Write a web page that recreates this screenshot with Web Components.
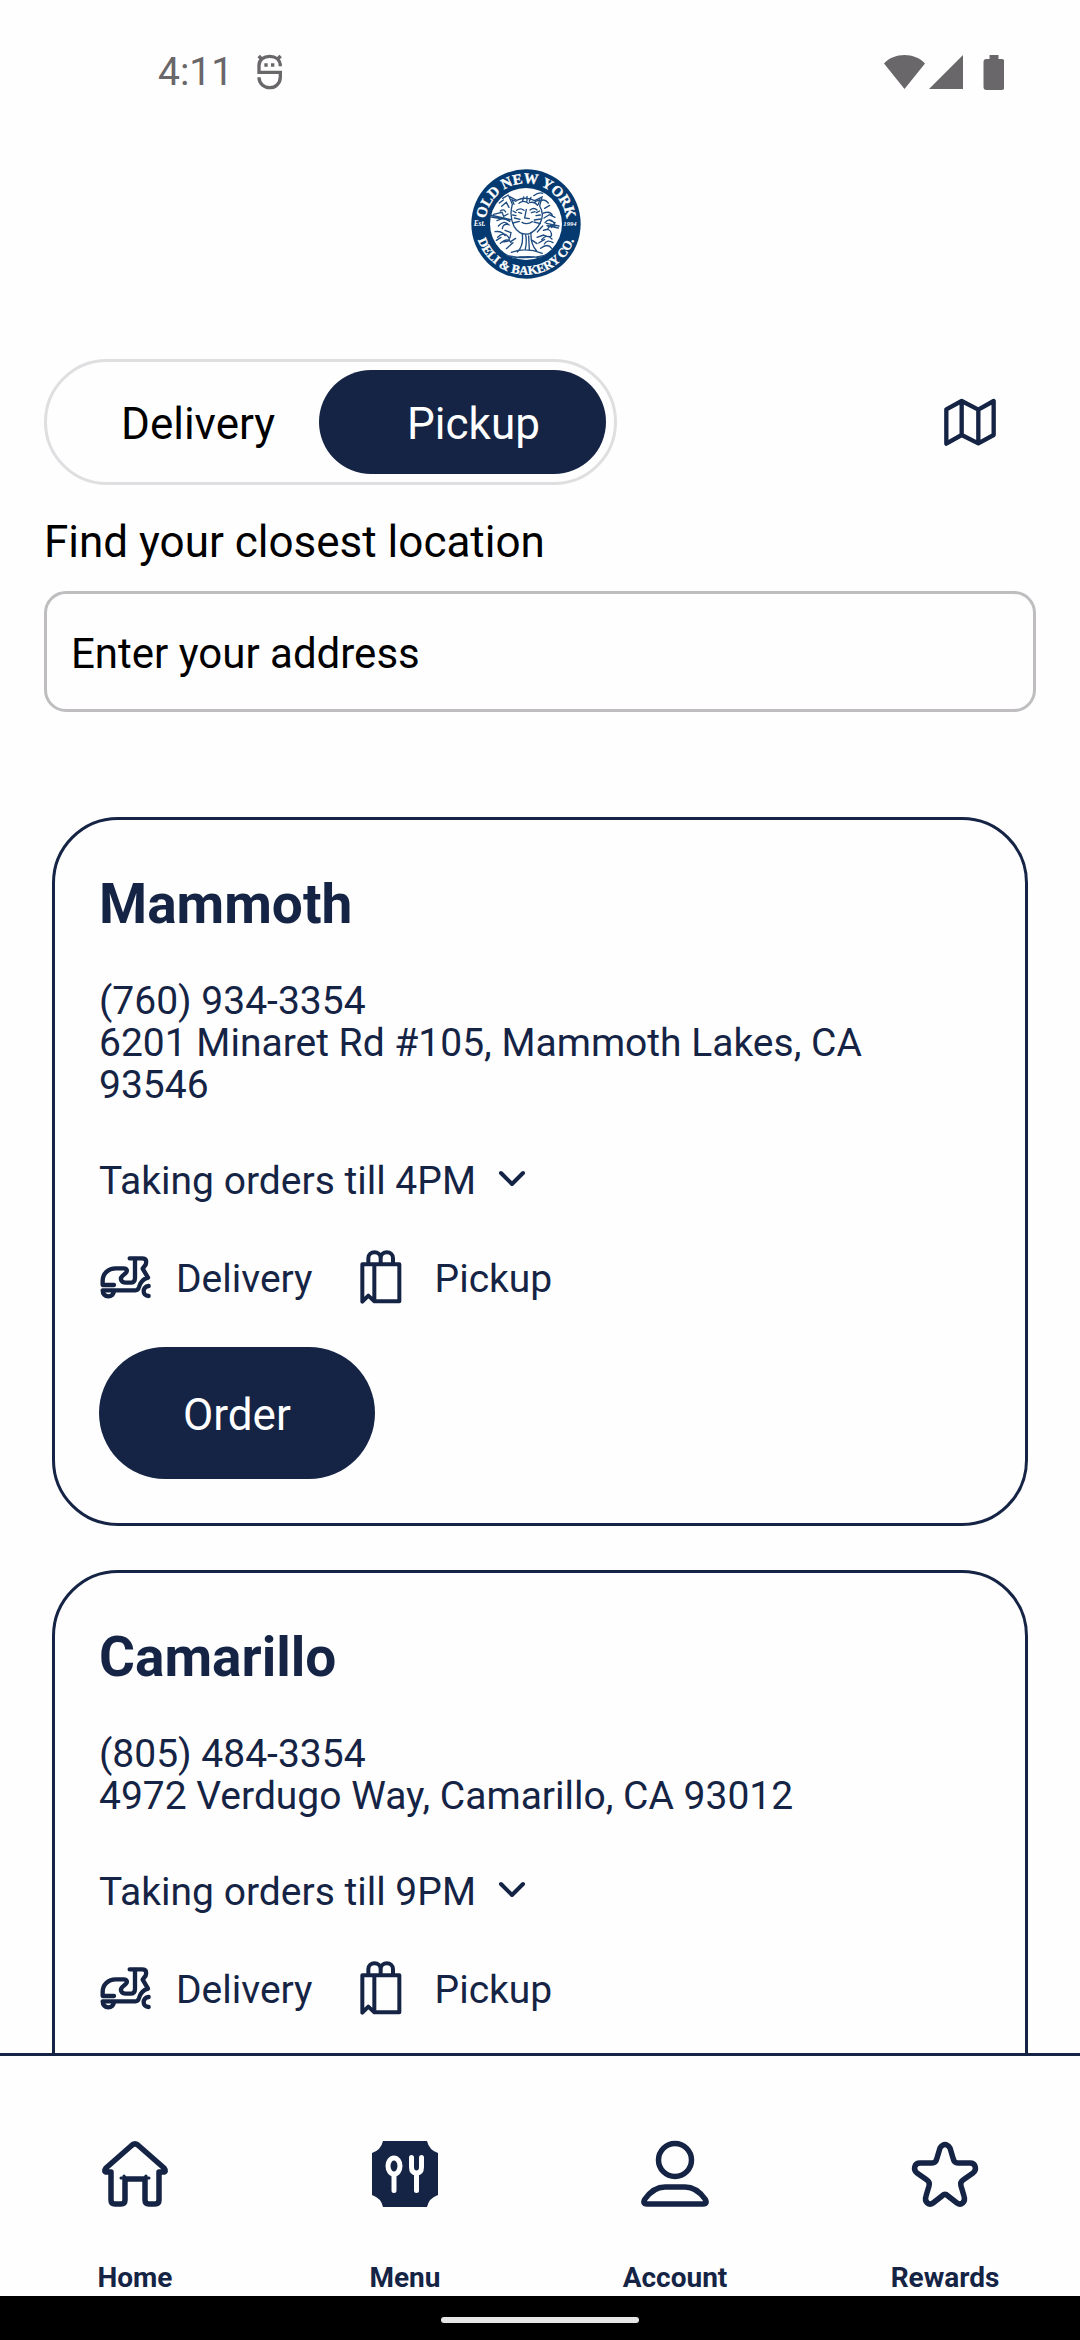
<!DOCTYPE html>
<html lang="en">
<head>
<meta charset="utf-8">
<meta name="viewport" content="width=device-width, initial-scale=1">
<title>Old New York Deli &amp; Bakery Co.</title>
<style>
:root {
    --navy: #152445;
    --paper: #fefefe;
}
body {
    margin: 0;
    height: 100vh;
    display: flex;
    flex-direction: column;
    background: var(--paper);
    color: #000;
    font-family: Roboto, "Liberation Sans", sans-serif;
}
main {
    flex: 1;
    min-height: 0;
    overflow-y: auto;
    scrollbar-width: none;
    padding: 28px 44px 0;
}
.brand {
    display: flex;
    justify-content: center;
    padding-right: 28px;
    margin-bottom: 80px;
}
.mode {
    display: flex;
    align-items: center;
    justify-content: space-between;
    margin-bottom: 31px;
}
.locations {
    display: flex;
    flex-direction: column;
    gap: 44px;
    margin: 105px 8px 44px;
}
</style>
</head>
<body>
<status-bar>4:11</status-bar>
<main>
    <div class="brand"><brand-logo></brand-logo></div>
    <div class="mode">
        <order-toggle></order-toggle>
        <map-button></map-button>
    </div>
    <address-search placeholder="Enter your address">Find your closest location</address-search>
    <div class="locations">
        <location-card>
            <span slot="name">Mammoth</span>
            <span slot="phone">(760) 934-3354</span>
            <span slot="address">6201 Minaret Rd #105, Mammoth Lakes, CA 93546</span>
            <span slot="hours">Taking orders till 4PM</span>
        </location-card>
        <location-card>
            <span slot="name">Camarillo</span>
            <span slot="phone">(805) 484-3354</span>
            <span slot="address">4972 Verdugo Way, Camarillo, CA 93012</span>
            <span slot="hours">Taking orders till 9PM</span>
        </location-card>
    </div>
</main>
<tab-bar>
    <tab-item icon="home">Home</tab-item>
    <tab-item icon="menu">Menu</tab-item>
    <tab-item icon="account">Account</tab-item>
    <tab-item icon="rewards">Rewards</tab-item>
</tab-bar>
<gesture-bar></gesture-bar>

<script>
// shared base: every element renders its own static markup
class BaseElement extends HTMLElement {
    constructor() {
        super();
        this.attachShadow({mode: 'open'});
    }
    connectedCallback() {
        this.shadowRoot.innerHTML = this.render();
    }
}

class StatusBar extends BaseElement {
    render() {
        return `
<style>
:host {
    display: flex;
    align-items: center;
    padding: 48px 76px 45px 158px;
    color: #69676a;
    font-size: 39px;
    line-height: 48px;
}
.time { margin-right: 23px; }
.right {
    display: flex;
    align-items: center;
    margin-left: auto;
}
svg { display: block; }
</style>
<span class="time"><slot></slot></span>
<svg width="27" height="36" viewBox="317 40 81 108" fill="none" stroke="currentColor" stroke-width="10" aria-hidden="true">
    <path d="M326 95V74C326 56 341 47 358 47S390 56 390 77M321 95H390V108C390 130 374 141 358 141S326 130 326 110M325 46l12 12M391 46l-12 12"/>
    <path d="M347 68v10M367 68v10"/>
</svg>
<div class="right">
    <svg width="120" height="36" viewBox="0 0 120 36" fill="currentColor" aria-hidden="true">
        <path d="M0 9.500C10-2 31-2 41 9.500L20.500 35zM45 35L79 1V35zM105.500 1h9v4h3q3 0 3 3v25q0 3-3 3h-15q-3 0-3-3V8q0-3 3-3h3z"/>
    </svg>
</div>`;
    }
}

class BrandLogo extends BaseElement {
    render() {
        return `
<style>
:host { display: block; }
svg { display: block; }
text {
    font-family: "Liberation Serif", serif;
    font-weight: bold;
    fill: #fff;
}
.ring {
    stroke: #fff;
    stroke-width: 1px;
}
.small { font-style: italic; }
</style>
<svg width="110" height="110" viewBox="0 0 330 330" role="img" aria-label="Old New York Deli and Bakery Co.">
    <defs>
        <path id="top" d="M43 165A122 122 0 0 1 287 165"/>
        <path id="bottom" d="M13 165A152 152 0 0 0 317 165"/>
    </defs>
    <circle cx="165" cy="165" r="164" fill="#053a70"/>
    <circle cx="165" cy="165" r="108" fill="#fff"/>
    <text class="ring" font-size="44" text-anchor="middle"><textPath href="#top" startOffset="50%">OLD NEW YORK</textPath></text>
    <text class="ring" font-size="38" text-anchor="middle"><textPath href="#bottom" startOffset="50%">DELI &amp; BAKERY CO.</textPath></text>
    <text class="small" x="8" y="171" font-size="22">Est.</text>
    <text class="small" x="277" y="171" font-size="20">1994</text>
    <g fill="none" stroke="#1e4c80" stroke-width="4" stroke-linecap="round">
        <path d="M124 106l-10-24 23 12q28-13 54 1l22-11-7 27q15 24 2 50-12 25-35 34-28 4-44-23-15-30-5-66z"/>
        <path d="M135 97l-12-5 6 14M193 98l13-6-4 14M144 103q13-12 28 0M176 101q14-5 24 8M137 124q11-9 22 0M177 123q12-9 21 0M143 130l9 3M181 131l11-3M166 121l-5 26 14 2M153 160q15 9 31-2M147 151l-17-4M145 157l-19 5M190 153l19-3M189 159l19 5M158 84l-4 14M168 82v14M180 85l-5 12M126 126l9 5M125 138l10 2M206 126l-10 5M208 138l-13 2"/>
        <path d="M154 196q4 35-15 53M180 192q-2 33 17 54M164 198q4 18-1 42M173 201l2 42M121 250q44-16 93 3M106 259q59 14 116 0M124 269q41-11 86-2"/>
        <path d="M68 136l25-6 5 12 13-7M78 155l20-8 18 10M82 171q18-20 31-4-17-5-19 12M72 188q22-3 30 12M80 205q18-19 31-2t-17 15M88 223q22-20 32-2M92 112l14-12 8 15M88 126q10-8 16 3M102 184l18 7-3 15M119 218l15-10M76 214l14-9M106 239l20-18"/>
        <path d="M215 133q23-9 29 6M219 147l16-10 17 8M222 161q13-16 25-2t-16 12M230 181q9-20 23-6M217 184q20-8 24 9t-21 6M212 212q14-19 31-2M220 225q9-15 26-4M209 238q21-17 33 0M236 154l16 7-11 15M215 171l-16 18M208 96q13-8 24 6M221 118l15-9M198 205l20-7M203 222l18-11M184 214l14 10"/>
        <path d="M58 138l62 14M60 144l57 9M226 163l38 8M228 170l34 7M188 80q16-12 27-7M95 88l17-10M85 102l12-9"/>
    </g>
</svg>`;
    }
}

class OrderToggle extends BaseElement {
    connectedCallback() {
        super.connectedCallback();
        const buttons = this.shadowRoot.querySelectorAll('button');
        buttons.forEach(button => button.addEventListener('click', () => {
            buttons.forEach(b => b.setAttribute('aria-pressed', b === button));
        }));
    }
    render() {
        return `
<style>
:host {
    display: flex;
    box-sizing: border-box;
    padding: 8px;
    border: 3px solid #dfdee0;
    border-radius: 63px;
}
button {
    height: 104px;
    border: 0;
    border-radius: 52px;
    background: none;
    color: #000;
    font: inherit;
    font-size: 44px;
    line-height: 52px;
    cursor: pointer;
}
.delivery { padding: 4px 44px 0 66px; }
.pickup { padding: 4px 66px 0 88px; }
button[aria-pressed="true"] {
    background: var(--navy);
    color: #fff;
}
</style>
<button class="delivery" type="button" aria-pressed="false">Delivery</button>
<button class="pickup" type="button" aria-pressed="true">Pickup</button>`;
    }
}

class MapButton extends BaseElement {
    render() {
        return `
<style>
:host { display: block; }
button {
    display: block;
    padding: 24px 40px;
    border: 0;
    background: none;
    color: var(--navy);
    cursor: pointer;
}
svg { display: block; }
</style>
<button type="button" aria-label="Show map">
    <svg width="52" height="48" viewBox="128 111 156 144" fill="none" stroke="currentColor" stroke-width="13" stroke-linejoin="round" aria-hidden="true">
        <path d="M135 248V145L181 120 231 146 277 120V222L231 247 181 222zM181 120V222M231 146V247"/>
    </svg>
</button>`;
    }
}

class AddressSearch extends BaseElement {
    render() {
        return `
<style>
:host { display: block; }
label {
    display: block;
    margin-bottom: 23px;
    font-size: 44px;
    line-height: 52px;
}
input {
    display: block;
    box-sizing: border-box;
    width: 100%;
    height: 121px;
    padding: 4px 24px 0;
    border: 3px solid #bfbdc0;
    border-radius: 22px;
    background: none;
    color: #000;
    font: inherit;
    font-size: 42px;
}
input::placeholder {
    color: #000;
    opacity: 1;
}
</style>
<label for="address"><slot></slot></label>
<input id="address" type="text" placeholder="${this.getAttribute('placeholder')}">`;
    }
}

class LocationCard extends BaseElement {
    render() {
        return `
<style>
:host {
    display: block;
    padding: 44px;
    border: 3px solid var(--navy);
    border-radius: 66px;
    color: var(--navy);
    font-size: 39px;
    line-height: 42px;
}
h2 {
    margin: 0 0 36px;
    font-size: 55px;
    line-height: 80px;
}
p { margin: 0; }
svg { display: block; }
.hours {
    display: flex;
    align-items: center;
    gap: 21px;
    margin: 51px 0 44px;
    padding: 0;
    border: 0;
    background: none;
    color: inherit;
    font: inherit;
    line-height: 48px;
    cursor: pointer;
}
.services {
    display: flex;
    align-items: center;
    gap: 46px;
    margin: 0 0 42px;
    padding: 0;
    list-style: none;
    line-height: 48px;
}
.services li {
    display: flex;
    align-items: center;
    gap: 24px;
}
.services li + li { gap: 32px; }
.services span { padding-top: 4px; }
.order {
    height: 132px;
    padding: 4px 84px 0;
    border: 0;
    border-radius: 66px;
    background: var(--navy);
    color: #fff;
    font: inherit;
    font-size: 44px;
    line-height: 52px;
    cursor: pointer;
}
</style>
<h2><slot name="name"></slot></h2>
<p><slot name="phone"></slot></p>
<p><slot name="address"></slot></p>
<button class="hours" type="button">
    <slot name="hours"></slot>
    <svg width="30" height="22" viewBox="0 0 30 22" fill="none" stroke="currentColor" stroke-width="4" stroke-linecap="round" stroke-linejoin="round" aria-hidden="true">
        <path d="M4 3L15 14 26 3"/>
    </svg>
</button>
<ul class="services">
    <li>
        <svg width="53" height="45" viewBox="60 164 159 135" fill="none" stroke="currentColor" stroke-width="13" stroke-linecap="round" stroke-linejoin="round" aria-hidden="true">
            <path d="M105 254H71V242C71 220 88 204 110 204H134C144 204 147 212 139 219L130 227C121 236 128 247 140 247H154C164 247 168 242 168 232V176"/>
            <path d="M152 174H190C202 174 203 182 200 193L191 205 207 232Q186 238 180 260 177 270 170 270H71C71 281 78 288 88 288S104 281 105 273"/>
            <path d="M209 257C198 258 194 266 194 273S199 287 209 287"/>
        </svg>
        <span>Delivery</span>
    </li>
    <li>
        <svg width="44" height="56" viewBox="836 146 132 168" fill="none" stroke="currentColor" stroke-width="12" stroke-linecap="round" stroke-linejoin="round" aria-hidden="true">
            <path d="M846 192H957V303H882L864 286 846 304zM882 192V303"/>
            <path d="M864 190V174C864 150 901 150 901 174V190M901 174C901 150 938 150 938 174V190"/>
        </svg>
        <span>Pickup</span>
    </li>
</ul>
<button class="order" type="button">Order</button>`;
    }
}

const tabIcons = {
    home: '<path d="M9 31H5Q1 31 4 27L29 5Q33 1 37 5L62 27Q65 31 61 31H57V59Q57 63 53 63H47Q43 63 43 59V38H23V59Q23 63 19 63H13Q9 63 9 59V31"/><path d="M19 37h4l-1-2M47 37h-4l1-2" stroke-width="3"/>',
    menu: '<path d="M11 0H55Q57 9 66 12V54Q57 57 55 66H11Q9 57 0 54V12Q9 9 11 0z" fill="currentColor" stroke="none"/>' +
        '<g stroke="#fff" stroke-width="5"><ellipse cx="22" cy="25" rx="6" ry="8"/><path d="M22 34V49.500M39.500 16.500V26Q39.500 32 44.500 32T49.500 26V16.500M44.500 33V49.500"/></g>',
    account: '<circle cx="33" cy="19" r="16.500"/><path d="M5 63H61Q66 63 63 58C58 51 51 46 43 46H23C15 46 8 51 3 58Q0 63 5 63z"/>',
    rewards: '<path d="M28 7Q33 0 38 7L41 17Q42 22 46 22H58C64 22 65 29 61 32L51 39Q48 41 49 45L52 55C54 61 49 65 45 62L36 55Q33 52 30 55L21 62C17 65 12 61 14 55L17 45Q18 41 15 39L5 32C1 29 2 22 8 22H20Q24 22 25 17z"/>'
};

class TabItem extends BaseElement {
    render() {
        return `
<style>
:host { flex: 1; }
a {
    display: flex;
    flex-direction: column;
    align-items: center;
    gap: 55px;
    color: var(--navy);
    font-size: 28px;
    font-weight: bold;
    line-height: 32px;
    text-decoration: none;
}
svg {
    display: block;
    overflow: visible;
}
</style>
<a href="#${this.getAttribute('icon')}">
    <svg width="66" height="66" viewBox="0 0 66 66" fill="none" stroke="currentColor" stroke-width="5.500" stroke-linecap="round" stroke-linejoin="round" aria-hidden="true">${tabIcons[this.getAttribute('icon')]}</svg>
    <span><slot></slot></span>
</a>`;
    }
}

class TabBar extends BaseElement {
    render() {
        return `
<style>
:host { display: block; }
nav {
    display: flex;
    padding: 85px 0 2px;
    border-top: 3px solid var(--navy);
}
</style>
<nav aria-label="Main"><slot></slot></nav>`;
    }
}

class GestureBar extends BaseElement {
    render() {
        return `
<style>
:host {
    display: flex;
    justify-content: center;
    padding: 21px 0 17px;
    background: #000;
}
span {
    width: 198px;
    height: 6px;
    border-radius: 3px;
    background: #e6e6e6;
}
</style>
<span></span>`;
    }
}

customElements.define('status-bar', StatusBar);
customElements.define('brand-logo', BrandLogo);
customElements.define('order-toggle', OrderToggle);
customElements.define('map-button', MapButton);
customElements.define('address-search', AddressSearch);
customElements.define('location-card', LocationCard);
customElements.define('tab-item', TabItem);
customElements.define('tab-bar', TabBar);
customElements.define('gesture-bar', GestureBar);
</script>
</body>
</html>
